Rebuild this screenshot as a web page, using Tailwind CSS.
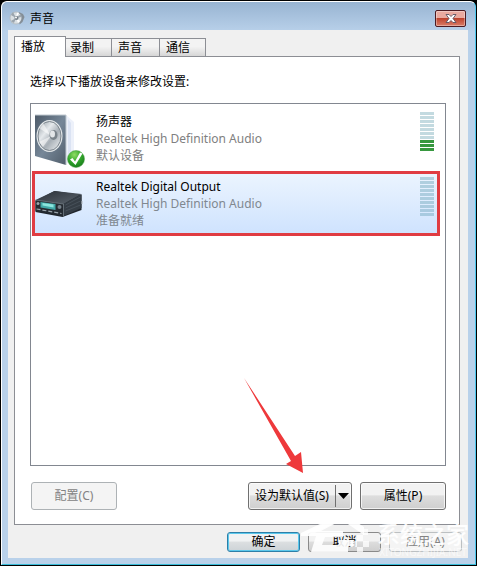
<!DOCTYPE html>
<html lang="zh-CN">
<head>
  <meta charset="UTF-8" />
  <title>声音</title>
  <script src="https://cdn.jsdelivr.net/npm/@tailwindcss/browser@4"></script>
</head>
<body class="bg-black font-['Noto_Sans','Noto_Sans_CJK_SC',sans-serif] text-xs text-black">
  <div class="relative min-h-screen flex flex-col p-px">
    <div class="flex-1 flex flex-col rounded-t-md border border-t-white border-l-white border-r-[#4cc8ee] border-b-[#38bcd8] bg-[#b9d1ea] bg-linear-to-b from-[#98b4d2] to-[#b9d1ea] to-[30px] pl-1.5 pr-[7px] pb-1.5">

      <header class="h-7 flex items-center pl-px">
        <svg class="w-4 h-4 mt-1" viewBox="0 0 16 16">
          <circle cx="7" cy="8" r="6.5" fill="#b4bcc3" />
          <path d="M10 2l4 2 1.500 3-2 5-3 2.500z" fill="#848e97" />
          <circle cx="7" cy="8" r="5.500" fill="#d9dfe3" />
          <path d="M7 8L2 5l2-3zM7 8l5-4 .5 3zM7 8l-2 5-3-2z" fill="#9aa4ad" />
          <path d="M7 8l1-5.500 2 .5zM7 8l4 3-2 2z" fill="#fff" />
          <circle cx="7.500" cy="8" r="2" fill="#737e88" />
          <circle cx="7" cy="7.500" r="1" fill="#fff" />
        </svg>
        <h1 class="flex-1 pl-[5px] pt-1.5 text-xs">声音</h1>
        <button type="button" aria-label="关闭" class="w-[31px] h-[17px] mt-1 mr-0.5 flex items-center justify-center rounded-xs border border-[#4b1b22] bg-linear-to-b from-[#e9aaa0] from-45% via-[#bd432e] via-50% to-[#da7c67] shadow-[inset_0_0_0_1px_rgba(255,255,255,0.35)]">
          <svg class="w-3 h-[9px]" viewBox="0 0 12 9">
            <path d="M1 .5h3l2 2 2-2h3L8 4.500l3 4H8l-2-2-2 2H1l3-4z" fill="#fff" stroke="#5b5261" stroke-width=".9" />
          </svg>
        </button>
      </header>

      <main class="flex-1 flex flex-col bg-[#f0f0f0] px-1.5 pt-1.5">
        <div role="tablist" class="relative z-10 flex items-end -mb-px">
          <button type="button" role="tab" aria-selected="true" class="w-[52px] h-[21px] pl-1.5 text-left border border-b-0 border-[#8c8e94] bg-white">播放</button>
          <button type="button" role="tab" aria-selected="false" class="w-[46px] h-[19px] pl-1 text-left border border-l-0 border-[#8c8e94] bg-linear-to-b from-[#f3f3f3] from-45% to-[#d6d6d6]">录制</button>
          <button type="button" role="tab" aria-selected="false" class="w-12 h-[19px] pl-1.5 text-left border border-l-0 border-[#8c8e94] bg-linear-to-b from-[#f3f3f3] from-45% to-[#d6d6d6]">声音</button>
          <button type="button" role="tab" aria-selected="false" class="w-[46px] h-[19px] pl-1.5 text-left border border-l-0 border-[#8c8e94] bg-linear-to-b from-[#f3f3f3] from-45% to-[#d6d6d6]">通信</button>
        </div>

        <section role="tabpanel" class="flex-1 flex flex-col mr-0.5 pl-[15px] pr-[13px] pt-[17px] pb-3.5 border border-[#8c8e94] bg-white">
          <p class="leading-4">选择以下播放设备来修改设置:</p>

          <div role="listbox" aria-label="播放设备" class="flex-1 mt-[13px] px-px pt-0.5 pr-[5px] border border-[#828790]">
            <div role="option" aria-selected="false" class="h-[65px] flex pl-[3px] pt-1.5 pr-1.5">
              <svg class="w-[52px] h-14 shrink-0" viewBox="0 0 52 56">
                <defs>
                  <linearGradient id="panel" x1="0" y1="0" x2="1" y2="1">
                    <stop offset="0" stop-color="#4d5a68" />
                    <stop offset=".5" stop-color="#768798" />
                    <stop offset="1" stop-color="#505d6a" />
                  </linearGradient>
                  <linearGradient id="cone" x1="0" y1="0" x2="1" y2="1">
                    <stop offset="0" stop-color="#929ba2" />
                    <stop offset=".35" stop-color="#e5e9ec" />
                    <stop offset=".6" stop-color="#a7afb6" />
                    <stop offset="1" stop-color="#f3f5f6" />
                  </linearGradient>
                  <radialGradient id="badge" cx=".4" cy=".25" r=".8">
                    <stop offset="0" stop-color="#8fdc62" />
                    <stop offset=".5" stop-color="#35a82d" />
                    <stop offset="1" stop-color="#137b18" />
                  </radialGradient>
                </defs>
                <path d="M31 3l8 7v31l-8 12z" fill="#edf1fa" />
                <path d="M33 7l3 4v28l-3 4z" fill="#dbe3f3" />
                <path d="M0 3h31v50L0 44z" fill="url(#panel)" />
                <path d="M0 3h31v50" fill="none" stroke="#c0c9d0" />
                <ellipse cx="14.500" cy="24" rx="13" ry="16" fill="#e5e9eb" />
                <ellipse cx="14.500" cy="24" rx="11.500" ry="14.500" fill="url(#cone)" stroke="#7b858d" />
                <path d="M16 24L4 16l4-5zM16 24L8 35l-4-5z" fill="#fff" opacity=".55" />
                <ellipse cx="18.500" cy="23" rx="4" ry="5" fill="#7a838a" />
                <ellipse cx="17.500" cy="22" rx="2.500" ry="3.500" fill="#e3e6e8" />
                <circle cx="41" cy="47" r="8.500" fill="url(#badge)" stroke="#4d9c48" stroke-width=".5" />
                <path d="M35 47.500l2.500-1.500 2.500 3.500 5-9 2.500 1-7 11.500z" fill="#fff" />
              </svg>
              <div class="flex-1 pl-[9px] pt-px leading-[17px]">
                <div>扬声器</div>
                <div class="text-[#808080]">Realtek High Definition Audio</div>
                <div class="text-[#808080]">默认设备</div>
              </div>
              <div role="meter" aria-label="音量" aria-valuenow="3" aria-valuemax="10" class="w-3.5 flex flex-col gap-px">
                <i class="h-[3px] bg-[#c3dae0]"></i>
                <i class="h-[3px] bg-[#c3dae0]"></i>
                <i class="h-[3px] bg-[#c3dae0]"></i>
                <i class="h-[3px] bg-[#c3dae0]"></i>
                <i class="h-[3px] bg-[#c3dae0]"></i>
                <i class="h-[3px] bg-[#c3dae0]"></i>
                <i class="h-[3px] bg-[#c3dae0]"></i>
                <i class="h-[3px] bg-[#37983f]"></i>
                <i class="h-[3px] bg-[#37983f]"></i>
                <i class="h-[3px] bg-[#37983f]"></i>
              </div>
            </div>

            <div role="option" aria-selected="true" class="h-[65px] flex pt-[3px] pr-[3px] border-3 border-[#e03c42] bg-linear-to-b from-[#ebf4fe] to-[#cfe3fe]">
              <svg class="w-[52px] h-12 shrink-0" viewBox="0 0 51 48">
                <defs>
                  <linearGradient id="boxTop" x1="0" y1="0" x2="1" y2="1">
                    <stop offset="0" stop-color="#2a3037" />
                    <stop offset="1" stop-color="#5b646d" />
                  </linearGradient>
                </defs>
                <path d="M0 24l19-10 27 4v15L27 40 0 35z" fill="#20262c" />
                <path d="M0 23l19-9 27 3-18 10z" fill="url(#boxTop)" />
                <path d="M28 27l18-10v14L28 39z" fill="#353d45" />
                <path d="M30 28l15-8M30 31l15-7M30 34l15-6" stroke="#4f5963" stroke-width=".7" />
                <path d="M0 23l28 4v12L0 34z" fill="#252b31" />
                <path d="M0 23l28 4v12" fill="none" stroke="#7d8890" stroke-width=".7" />
                <path d="M5 25l15 2v6L5 30.500z" fill="#42aaa9" />
                <path d="M7 26l11 1.500v3L7 28.500z" fill="#8be6dd" />
                <circle cx="2.500" cy="26.500" r="1.500" fill="#98a3aa" />
                <circle cx="24" cy="30" r="2" fill="#77828b" />
                <path d="M1 32l25 4.500" stroke="#9ba5ac" stroke-width="1.200" stroke-dasharray="4 2" />
                <path d="M46 24h1v3h-1z" fill="#b3bbc1" />
              </svg>
              <div class="flex-1 pl-[9px] pt-px leading-[17px]">
                <div>Realtek Digital Output</div>
                <div class="text-[#808890]">Realtek High Definition Audio</div>
                <div class="text-[#808890]">准备就绪</div>
              </div>
              <div role="meter" aria-label="音量" aria-valuenow="0" aria-valuemax="10" class="w-3.5 flex flex-col gap-px">
                <i class="h-[3px] bg-[#b1cfdf]"></i>
                <i class="h-[3px] bg-[#b0cfdf]"></i>
                <i class="h-[3px] bg-[#afcfdf]"></i>
                <i class="h-[3px] bg-[#aecedf]"></i>
                <i class="h-[3px] bg-[#adcddf]"></i>
                <i class="h-[3px] bg-[#accddf]"></i>
                <i class="h-[3px] bg-[#abccdf]"></i>
                <i class="h-[3px] bg-[#aacbdf]"></i>
                <i class="h-[3px] bg-[#a9cae0]"></i>
                <i class="h-[3px] bg-[#a8cae0]"></i>
              </div>
            </div>
          </div>

          <div class="flex mt-4 pl-px">
            <button type="button" disabled class="w-[86px] h-7 rounded-[3px] border border-[#adb2b5] bg-[#f4f4f4] text-[#838383]">配置(C)</button>
            <div class="relative ml-auto flex w-[104px] h-7 rounded-[3px] border border-[#707070] bg-linear-to-b from-[#f2f2f2] from-45% via-[#dddddd] via-50% to-[#cfcfcf] shadow-[inset_0_0_0_1px_rgba(255,255,255,0.7)]">
              <button type="button" class="flex-1">设为默认值(S)</button>
              <button type="button" aria-label="更多" class="w-4 my-0.5 flex items-center justify-center border-l border-[#707070]">
                <svg class="w-[11px] h-1.5" viewBox="0 0 11 6"><path d="M0 0h11L5.500 6z" /></svg>
              </button>
              <svg class="absolute -top-[105px] -left-[5px] w-[60px] h-24 pointer-events-none" viewBox="0 0 60 96">
                <path d="M0 0L51 78l6-4 2 21-17-9 5-3z" fill="#ee393b" />
              </svg>
            </div>
            <button type="button" class="w-[86px] h-7 ml-2 rounded-[3px] border border-[#707070] bg-linear-to-b from-[#f2f2f2] from-45% via-[#dddddd] via-50% to-[#cfcfcf] shadow-[inset_0_0_0_1px_rgba(255,255,255,0.7)]">属性(P)</button>
          </div>
        </section>

        <footer class="flex justify-end gap-2 pt-[7px] pb-1.5">
          <button type="button" class="w-[73px] h-5 rounded-[3px] border border-[#2d7fa8] bg-linear-to-b from-[#f0f2f3] from-45% via-[#dcdfe1] via-50% to-[#cdd3d7] shadow-[inset_0_0_0_1px_#5bc8ec]">确定</button>
          <button type="button" class="w-[73px] h-5 rounded-[3px] border border-[#8a8a8a] bg-linear-to-b from-[#f2f2f2] from-45% via-[#dddddd] via-50% to-[#cfcfcf]">取消</button>
          <button type="button" disabled class="w-[73px] h-5 rounded-[3px] border border-[#bcc0c2] bg-[#f4f4f4] text-[#838383]">应用(A)</button>
        </footer>
      </main>
    </div>

    <!-- site watermark -->
    <div class="absolute right-2 bottom-2 flex items-end text-white pointer-events-none">
      <svg class="w-[76px] h-12" viewBox="0 0 76 48" fill="#fff">
        <path d="M0 23L42 3l21 14v8L41 10 20 21h22v6H24l-3 8h17v-5h14v6h-5v6H10l5-16H0z" fill-opacity=".9" />
        <path d="M42 3L4 23h10L44 8z" fill-opacity=".6" />
        <path d="M56 25h6v6h-6zM62 19h5v6h-5zM62 31h6v6h-6zM50 31h6v6h-6zM56 37h6v5h-6z" fill-opacity=".75" />
      </svg>
      <div class="w-[92px] text-center">
        <div class="text-[23px] leading-6 font-medium text-white/90 whitespace-nowrap">系统之家</div>
        <div class="text-[10px] leading-3 text-white/60 whitespace-nowrap">XITONGZHIJIA.NET</div>
      </div>
    </div>
  </div>
</body>
</html>
